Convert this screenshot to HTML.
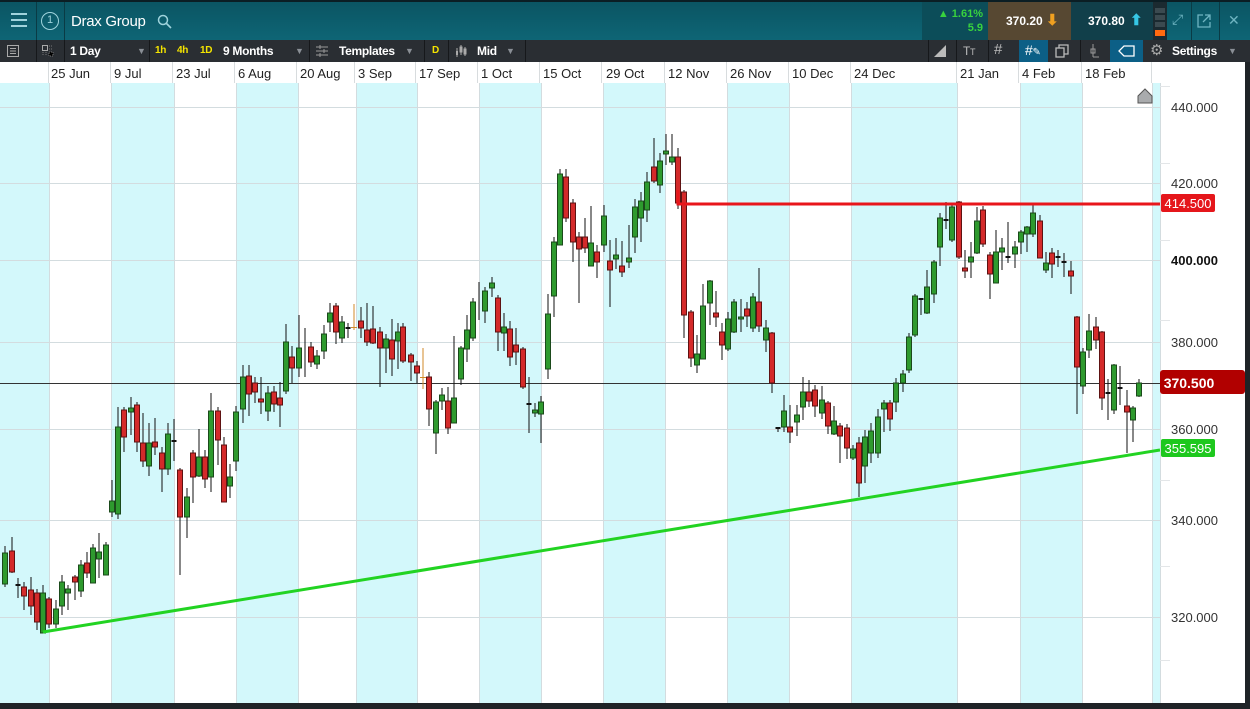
<!DOCTYPE html>
<html><head><meta charset="utf-8"><style>
*{margin:0;padding:0;box-sizing:border-box}
body{width:1250px;height:709px;overflow:hidden;background:#1f2327;font-family:"Liberation Sans",sans-serif;position:relative}
.abs{position:absolute}
#top{left:0;top:0;width:1250px;height:40px;background:linear-gradient(#0b5563,#0e6575);border-top:2px solid #0b1e24}
#tb{left:0;top:40px;width:1250px;height:22px;background:#2a2e33}
.t{position:absolute;color:#fff;font-size:12px;font-weight:bold;top:4px;letter-spacing:-0.3px}
.y{color:#f4e400;font-size:10px;top:5px}
.dv{position:absolute;top:0;width:1px;height:22px;background:#16181b}
.ar{position:absolute;color:#8a8f96;font-size:9px;top:6px}
#dates{left:0;top:62px;width:1245px;height:21px;background:#fff}
.d{position:absolute;top:4px;font-size:13px;color:#222}
.ds{position:absolute;top:0;width:1px;height:21px;background:#d8dcde}
</style></head><body>
<div id="top" class="abs">
 <div class="abs" style="left:36px;top:0;width:1px;height:38px;background:#0a3b45"></div>
 <div class="abs" style="left:64px;top:0;width:1px;height:38px;background:#0a3b45"></div>
 <div class="abs" style="left:11px;top:11px;width:16px;height:2px;background:#9fd3dc;box-shadow:0 6px 0 #9fd3dc,0 12px 0 #9fd3dc"></div>
 <div class="abs" style="left:41px;top:10px;width:18px;height:18px;border:1.5px solid #9fd3dc;border-radius:50%;color:#9fd3dc;font-size:11px;text-align:center;line-height:15px">1</div>
 <div class="abs" style="left:71px;top:11px;color:#fff;font-size:15px;letter-spacing:-0.3px">Drax Group</div>
 <svg class="abs" style="left:157px;top:12px" width="16" height="16"><circle cx="6" cy="6" r="4.5" fill="none" stroke="#9fd3dc" stroke-width="1.5"/><path d="M9.5 9.5L14 14" stroke="#9fd3dc" stroke-width="1.6"/></svg>
 <div class="abs" style="left:922px;top:0;width:66px;height:38px;background:#0c4d59"></div>
 <div class="abs" style="left:930px;top:6px;width:53px;text-align:right;color:#38d23e;font-size:11px;font-weight:bold">▲ 1.61%</div>
 <div class="abs" style="left:930px;top:20px;width:53px;text-align:right;color:#38d23e;font-size:11px;font-weight:bold">5.9</div>
 <div class="abs" style="left:988px;top:0;width:83px;height:38px;background:#574832"></div>
 <div class="abs" style="left:1006px;top:12px;color:#fff;font-size:12px;font-weight:bold">370.20</div>
 <div class="abs" style="left:1046px;top:9px;color:#f0a020;font-size:15px;font-weight:bold">⬇</div>
 <div class="abs" style="left:1071px;top:0;width:82px;height:38px;background:#113f4a"></div>
 <div class="abs" style="left:1088px;top:12px;color:#fff;font-size:12px;font-weight:bold">370.80</div>
 <div class="abs" style="left:1130px;top:9px;color:#36c7e6;font-size:15px;font-weight:bold">⬆</div>
 <div class="abs" style="left:1153px;top:0;width:14px;height:38px;background:#1b2a30"></div>
 <div class="abs" style="left:1155px;top:6px;width:10px;height:5px;background:#3b4a50;box-shadow:0 7px 0 #3b4a50,0 14px 0 #3b4a50"></div>
 <div class="abs" style="left:1155px;top:28px;width:10px;height:6px;background:#ff6a10"></div>
 <div class="abs" style="left:1191px;top:0;width:1px;height:38px;background:#0a3b45"></div>
 <div class="abs" style="left:1219px;top:0;width:1px;height:38px;background:#0a3b45"></div>
 <div class="abs" style="left:1172px;top:9px;color:#6fb5c2;font-size:14px">⤢</div>
 <svg class="abs" style="left:1197px;top:12px" width="14" height="14"><path d="M6 1H1V13H13V8M8 1H13V6M13 1L6 8" fill="none" stroke="#6fb5c2" stroke-width="1.3"/></svg>
 <div class="abs" style="left:1228px;top:10px;color:#6fb5c2;font-size:14px">✕</div>
</div>
<div id="tb" class="abs">
 <svg class="abs" style="left:7px;top:5px" width="12" height="12"><rect x="0.5" y="0.5" width="11" height="11" fill="none" stroke="#aaa"/><path d="M3 3.5h6M3 6h6M3 8.5h6" stroke="#aaa"/></svg>
 <div class="dv" style="left:36px"></div>
 <svg class="abs" style="left:42px;top:5px" width="12" height="12"><rect x="0.5" y="0.5" width="5" height="5" fill="none" stroke="#aaa"/><path d="M7 1h4M7 4h4M1 7v4M4 7v4M7 7h4v4h-4z" stroke="#777" stroke-dasharray="1 1"/></svg>
 <div class="dv" style="left:64px"></div>
 <div class="t" style="left:70px">1 Day</div><div class="ar" style="left:137px">▼</div>
 <div class="dv" style="left:149px"></div>
 <div class="t y" style="left:155px">1h</div><div class="t y" style="left:177px">4h</div><div class="t y" style="left:200px">1D</div>
 <div class="t" style="left:223px">9 Months</div><div class="ar" style="left:295px">▼</div>
 <div class="dv" style="left:309px"></div>
 <svg class="abs" style="left:316px;top:5px" width="12" height="12"><path d="M0 2h12M0 6h12M0 10h12" stroke="#999"/><path d="M4 0v4M8 4v4M4 8v4" stroke="#999"/></svg>
 <div class="t" style="left:339px">Templates</div><div class="ar" style="left:405px">▼</div>
 <div class="dv" style="left:424px"></div>
 <div class="t y" style="left:432px">D</div>
 <div class="dv" style="left:448px"></div>
 <svg class="abs" style="left:455px;top:4px" width="12" height="14"><path d="M2 4v9M6 1v10M10 3v9" stroke="#aaa"/><rect x="1" y="7" width="2" height="4" fill="#aaa"/><rect x="5" y="3" width="2" height="5" fill="none" stroke="#aaa"/><rect x="9" y="5" width="2" height="5" fill="none" stroke="#aaa"/></svg>
 <div class="t" style="left:477px">Mid</div><div class="ar" style="left:506px">▼</div>
 <div class="dv" style="left:525px"></div>
 <div class="dv" style="left:928px"></div>
 <svg class="abs" style="left:933px;top:4px" width="14" height="14"><path d="M1 13L13 1V13Z" fill="#bbb"/></svg>
 <div class="dv" style="left:956px"></div>
 <div class="t" style="left:963px;font-weight:normal;color:#bbb;font-size:12px">T<span style="font-size:9px">T</span></div>
 <div class="dv" style="left:988px"></div>
 <div class="t" style="left:994px;font-weight:normal;color:#bbb;font-size:15px;top:1px">#</div>
 <div class="abs" style="left:1019px;top:0;width:29px;height:22px;background:#0c5f86"></div>
 <div class="t" style="left:1025px;font-weight:normal;color:#fff;font-size:14px;top:2px">#<span style="font-size:10px">✎</span></div>
 <svg class="abs" style="left:1055px;top:4px" width="14" height="14"><rect x="1" y="4" width="8" height="9" fill="none" stroke="#bbb" stroke-width="1.3"/><path d="M4 4V1h9v9h-4" fill="none" stroke="#bbb" stroke-width="1.3"/></svg>
 <div class="dv" style="left:1080px"></div>
 <svg class="abs" style="left:1088px;top:4px" width="12" height="14"><path d="M5 0v13M5 13h6" stroke="#999"/><rect x="3" y="5" width="4" height="4" fill="none" stroke="#999"/></svg>
 <div class="abs" style="left:1110px;top:0;width:33px;height:22px;background:#0c5f86"></div>
 <svg class="abs" style="left:1118px;top:5px" width="18" height="12"><path d="M16 1H6L1 6L6 11H16Z" fill="none" stroke="#fff" stroke-width="1.3"/></svg>
 <div class="abs" style="left:1150px;top:1px;color:#aaa;font-size:15px">⚙</div>
 <div class="t" style="left:1172px">Settings</div><div class="ar" style="left:1228px">▼</div>
</div>
<div id="dates" class="abs">
 <div class="ds" style="left:48px"></div><div class="ds" style="left:110px"></div><div class="ds" style="left:172px"></div><div class="ds" style="left:234px"></div><div class="ds" style="left:296px"></div><div class="ds" style="left:354px"></div><div class="ds" style="left:415px"></div><div class="ds" style="left:477px"></div><div class="ds" style="left:539px"></div><div class="ds" style="left:601px"></div><div class="ds" style="left:664px"></div><div class="ds" style="left:726px"></div><div class="ds" style="left:788px"></div><div class="ds" style="left:850px"></div><div class="ds" style="left:956px"></div><div class="ds" style="left:1018px"></div><div class="ds" style="left:1081px"></div><div class="ds" style="left:1151px"></div>
 <div class="d" style="left:51px">25 Jun</div><div class="d" style="left:114px">9 Jul</div><div class="d" style="left:176px">23 Jul</div><div class="d" style="left:238px">6 Aug</div><div class="d" style="left:300px">20 Aug</div><div class="d" style="left:358px">3 Sep</div><div class="d" style="left:419px">17 Sep</div><div class="d" style="left:481px">1 Oct</div><div class="d" style="left:543px">15 Oct</div><div class="d" style="left:606px">29 Oct</div><div class="d" style="left:668px">12 Nov</div><div class="d" style="left:730px">26 Nov</div><div class="d" style="left:792px">10 Dec</div><div class="d" style="left:854px">24 Dec</div><div class="d" style="left:960px">21 Jan</div><div class="d" style="left:1022px">4 Feb</div><div class="d" style="left:1085px">18 Feb</div>
</div>
<svg class="abs" style="left:0;top:0" width="1250" height="709" viewBox="0 0 1250 709">
 <rect x="0" y="83" width="1245" height="620" fill="#fff"/>
 <g fill="#d3f8fb">
  <rect x="0" y="83" width="49" height="620"/><rect x="111" y="83" width="63" height="620"/><rect x="236" y="83" width="62" height="620"/><rect x="356" y="83" width="61" height="620"/><rect x="479" y="83" width="62" height="620"/><rect x="603" y="83" width="62" height="620"/><rect x="727" y="83" width="62" height="620"/><rect x="851" y="83" width="106" height="620"/><rect x="1020" y="83" width="62" height="620"/><rect x="1152" y="83" width="8" height="620"/>
 </g>
 <g stroke="#d3dcdf" stroke-width="1">
  <path d="M49.5 83V703M111.5 83V703M174.5 83V703M236.5 83V703M298.5 83V703M356.5 83V703M417.5 83V703M479.5 83V703M541.5 83V703M603.5 83V703M665.5 83V703M727.5 83V703M789.5 83V703M851.5 83V703M957.5 83V703M1020.5 83V703M1082.5 83V703M1152.5 83V703M1160.5 83V703"/>
  <path d="M0 107.5H1160M0 183.5H1160M0 260.5H1160M0 342.5H1160M0 429.5H1160M0 520.5H1160M0 617.5H1160"/>
 </g>
 <path d="M0 383.5H1160" stroke="#333" stroke-width="1"/>
 <g stroke="#111" stroke-width="1">
 <path d="M5 546V587M12 537V573M18 578V598M24 582V610M31 577V615M37 589V630M43 585V633M49 597V628M56 600V628M62 575V615M68 585V610M75 575V600M81 560V597M87 552V578M93 544V583M99 533V578M106 542V575M112 480V517M118 407V519M124 407V452M131 397V435M137 402V452M143 413V467M149 423V476M155 418V455M162 447V492M168 423V475M174 419V461M180 468V575M187 488V538M193 450V503M199 429V477M205 450V488M211 393V492M218 407V465M224 437V502M230 464V498M236 406V471"/>
 <path d="M243 365V423M249 365V416M255 377V403M261 377V414M268 386V421M274 386V412M280 382V427M286 324V394M292 346V383M299 315V377M305 328V377M311 342V367M317 350V369M324 325V359M330 303V332M336 303V344M342 316V343M348 323V338M361 307V338M367 303V346M373 306V344M380 327V387M386 334V373M392 319V376M398 323V369M403 323V363M411 353V381M417 361V383M429 372V426M436 400V454M442 388V410M448 387V434M454 336V423M461 346V385M467 315V362M473 298V341M479 282V320M485 287V323M492 277V297M498 295V351M504 313V351M510 321V366M516 328V365M523 347V389M529 377V433M535 403V417M541 396V443"/>
 <path d="M548 294V379M554 237V317M560 169V245M566 169V222M573 199V262M579 232V303M585 218V253M591 206V266M597 245V278M604 205V252M610 240V307M616 238V269M622 241V277M629 225V268M635 199V253M641 192V242M647 172V222M654 138V183M660 153V193M666 134V165M672 134V165M678 148V209M684 190V338M691 310V367M697 335V373M703 284V359M710 280V325M716 291V327M722 323V360M728 312V351M734 299V333M741 299V332M747 302V327M753 293V332M759 268V332M766 320V352M772 332V393M778 427V432M784 395V432M790 405V443M797 405V436"/>
 <path d="M803 377V420M809 380V407M815 385V417M822 386V419M828 401V434M834 406V435M840 423V463M847 424V459M853 445V460M859 437V497M865 430V483M871 423V463M878 409V458M884 400V432M890 400V431M896 378V412M903 370V392M909 333V373M915 294V337M921 298V315M927 270V314M934 260V303M940 213V266M946 202V229M952 203V242M959 201V259M965 250V278M971 242V278M977 207V254M983 206V247M990 252V299M996 230V283M1002 238V270M1008 222V263M1015 241V268M1021 230V254M1027 226V252M1033 205V237M1040 215V258M1046 252V273M1052 248V278M1058 250V267M1064 253V277M1071 261V294M1077 316V414M1083 348V394M1089 314V358M1096 317V349M1102 331V410M1108 379V420M1114 364V414M1120 366V405M1127 390V453M1133 406V442M1139 379V397"/>
 </g>
 <path stroke="#d08a2a" d="M354 304V330M351 327.5H357M423 348V389M420 377.5H426"/>
 <g fill="#2e9a2e" stroke="#1b4a1b" stroke-width="1">
 <path d="M2.5 553h5V584h-5ZM40.5 593h5V633h-5ZM53.5 609h5V624h-5ZM59.5 582h5V606h-5ZM65.5 589h5V593h-5ZM78.5 565h5V591h-5ZM90.5 548h5V583h-5ZM96.5 552h5V559h-5ZM103.5 545h5V575h-5ZM109.5 501h5V512h-5ZM115.5 427h5V514h-5ZM128.5 408h5V412h-5ZM146.5 443h5V466h-5ZM165.5 434h5V469h-5ZM184.5 497h5V517h-5ZM196.5 457h5V476h-5ZM208.5 411h5V477h-5ZM227.5 477h5V486h-5ZM233.5 412h5V461h-5Z"/>
 <path d="M240.5 377h5V409h-5ZM265.5 393h5V411h-5ZM283.5 342h5V391h-5ZM296.5 348h5V368h-5ZM314.5 356h5V364h-5ZM321.5 334h5V351h-5ZM327.5 313h5V322h-5ZM339.5 322h5V338h-5ZM383.5 339h5V348h-5ZM395.5 332h5V341h-5ZM433.5 402h5V433h-5ZM439.5 395h5V401h-5ZM451.5 398h5V423h-5ZM458.5 348h5V379h-5ZM464.5 330h5V349h-5ZM470.5 302h5V338h-5ZM482.5 291h5V311h-5ZM489.5 283h5V288h-5ZM501.5 327h5V333h-5ZM532.5 410h5V413h-5ZM538.5 402h5V414h-5Z"/>
 <path d="M545.5 314h5V369h-5ZM551.5 242h5V296h-5ZM557.5 174h5V245h-5ZM588.5 243h5V266h-5ZM601.5 216h5V245h-5ZM613.5 255h5V259h-5ZM626.5 258h5V262h-5ZM632.5 207h5V237h-5ZM638.5 201h5V218h-5ZM644.5 182h5V210h-5ZM657.5 161h5V185h-5ZM663.5 151h5V154h-5ZM669.5 157h5V162h-5ZM694.5 354h5V365h-5ZM700.5 306h5V359h-5ZM707.5 281h5V303h-5ZM725.5 319h5V349h-5ZM731.5 302h5V332h-5ZM738.5 317h5V319h-5ZM750.5 297h5V328h-5ZM763.5 328h5V340h-5ZM781.5 411h5V427h-5ZM794.5 415h5V422h-5Z"/>
 <path d="M800.5 392h5V407h-5ZM819.5 400h5V413h-5ZM831.5 421h5V434h-5ZM850.5 449h5V458h-5ZM862.5 437h5V466h-5ZM868.5 431h5V453h-5ZM875.5 417h5V453h-5ZM881.5 403h5V409h-5ZM893.5 383h5V402h-5ZM900.5 374h5V383h-5ZM906.5 337h5V370h-5ZM912.5 296h5V335h-5ZM924.5 287h5V313h-5ZM931.5 262h5V294h-5ZM937.5 218h5V247h-5ZM949.5 207h5V240h-5ZM968.5 257h5V262h-5ZM974.5 221h5V253h-5ZM993.5 252h5V283h-5ZM999.5 248h5V252h-5ZM1012.5 247h5V254h-5ZM1018.5 232h5V242h-5ZM1024.5 227h5V234h-5ZM1030.5 213h5V234h-5ZM1043.5 263h5V270h-5ZM1080.5 352h5V386h-5ZM1086.5 331h5V350h-5ZM1111.5 365h5V410h-5ZM1130.5 408h5V420h-5ZM1136.5 383h5V396h-5Z"/>
 </g>
 <g fill="#d42a2a" stroke="#5e1212" stroke-width="1">
 <path d="M9.5 551h5V572h-5ZM21.5 587h5V596h-5ZM28.5 590h5V606h-5ZM34.5 593h5V622h-5ZM46.5 599h5V624h-5ZM72.5 577h5V582h-5ZM84.5 563h5V573h-5ZM121.5 410h5V437h-5ZM134.5 405h5V442h-5ZM140.5 443h5V461h-5ZM152.5 442h5V447h-5ZM159.5 453h5V469h-5ZM177.5 470h5V517h-5ZM190.5 453h5V477h-5ZM202.5 457h5V479h-5ZM215.5 411h5V440h-5ZM221.5 445h5V502h-5Z"/>
 <path d="M246.5 376h5V394h-5ZM252.5 383h5V392h-5ZM258.5 399h5V402h-5ZM271.5 392h5V404h-5ZM277.5 398h5V405h-5ZM289.5 357h5V368h-5ZM308.5 347h5V362h-5ZM333.5 306h5V332h-5ZM358.5 321h5V328h-5ZM364.5 330h5V342h-5ZM370.5 329h5V343h-5ZM377.5 332h5V348h-5ZM389.5 340h5V359h-5ZM400.5 327h5V361h-5ZM408.5 355h5V362h-5ZM414.5 366h5V373h-5ZM426.5 377h5V409h-5ZM445.5 401h5V428h-5ZM495.5 298h5V332h-5ZM507.5 329h5V357h-5ZM513.5 345h5V352h-5ZM520.5 349h5V387h-5Z"/>
 <path d="M563.5 177h5V218h-5ZM570.5 203h5V242h-5ZM576.5 237h5V249h-5ZM582.5 237h5V248h-5ZM594.5 252h5V262h-5ZM607.5 261h5V270h-5ZM619.5 266h5V272h-5ZM651.5 167h5V181h-5ZM675.5 157h5V203h-5ZM681.5 192h5V315h-5ZM688.5 312h5V358h-5ZM713.5 313h5V317h-5ZM719.5 332h5V345h-5ZM744.5 309h5V316h-5ZM756.5 302h5V326h-5ZM769.5 333h5V383h-5ZM787.5 427h5V432h-5Z"/>
 <path d="M806.5 392h5V401h-5ZM812.5 390h5V406h-5ZM825.5 403h5V426h-5ZM837.5 426h5V436h-5ZM844.5 428h5V448h-5ZM856.5 443h5V483h-5ZM887.5 403h5V419h-5ZM956.5 202h5V257h-5ZM962.5 268h5V271h-5ZM980.5 210h5V244h-5ZM987.5 255h5V274h-5ZM1037.5 221h5V258h-5ZM1049.5 253h5V264h-5ZM1068.5 271h5V276h-5ZM1074.5 317h5V367h-5ZM1093.5 327h5V340h-5ZM1099.5 332h5V398h-5ZM1124.5 406h5V412h-5Z"/>
 </g>
 <g fill="#111">
  <rect x="15.5" y="584" width="5" height="2"/><rect x="171.5" y="440" width="5" height="2"/><rect x="345.5" y="327" width="5" height="2"/><rect x="526.5" y="403" width="5" height="2"/><rect x="775.5" y="427" width="5" height="2"/><rect x="918.5" y="298" width="5" height="2"/><rect x="943.5" y="219" width="5" height="2"/><rect x="1005.5" y="256" width="5" height="2"/><rect x="1055.5" y="256" width="5" height="2"/><rect x="1061.5" y="261" width="5" height="2"/><rect x="1105.5" y="392" width="5" height="2"/><rect x="1117.5" y="387" width="5" height="2"/>
 </g>
 <path d="M678 190V204H1160" fill="none" stroke="#e8161b" stroke-width="3"/>
 <path d="M43 632L1160 450" stroke="#22d322" stroke-width="3"/>
 <path d="M1138 96L1145 89L1152 96V103H1138Z" fill="#a9abad" stroke="#555"/>
 <rect x="1160" y="83" width="85" height="620" fill="#fff"/>
 <path d="M1160.5 83V703" stroke="#d3dcdf"/>
 <g stroke="#e3e6e8"><path d="M1160 86.5H1170M1160 163.5H1170M1160 240.5H1170M1160 320.5H1170M1160 383.5H1170M1160 480.5H1170M1160 566.5H1170M1160 660.5H1170"/></g>
 <g font-family="Liberation Sans, sans-serif" font-size="13" fill="#333" text-anchor="end">
  <text x="1218" y="112">440.000</text><text x="1218" y="188">420.000</text><text x="1218" y="265" font-weight="bold" fill="#111">400.000</text><text x="1218" y="347">380.000</text><text x="1218" y="434">360.000</text><text x="1218" y="525">340.000</text><text x="1218" y="622">320.000</text>
 </g>
 <rect x="1161" y="194" width="54" height="18" rx="2" fill="#e5161b"/>
 <text x="1188" y="208" font-family="Liberation Sans, sans-serif" font-size="13" fill="#fff" text-anchor="middle">414.500</text>
 <rect x="1160" y="370" width="85" height="24" rx="3" fill="#b10000"/>
 <text x="1189" y="388" font-family="Liberation Sans, sans-serif" font-size="14" font-weight="bold" fill="#fff" text-anchor="middle">370.500</text>
 <rect x="1161" y="439" width="54" height="18" rx="2" fill="#1ec81e"/>
 <text x="1188" y="453" font-family="Liberation Sans, sans-serif" font-size="13" fill="#fff" text-anchor="middle">355.595</text>
 <rect x="1245" y="62" width="5" height="647" fill="#1f2327"/>
 <rect x="0" y="703" width="1250" height="6" fill="#1f2327"/>
</svg>
</body></html>
